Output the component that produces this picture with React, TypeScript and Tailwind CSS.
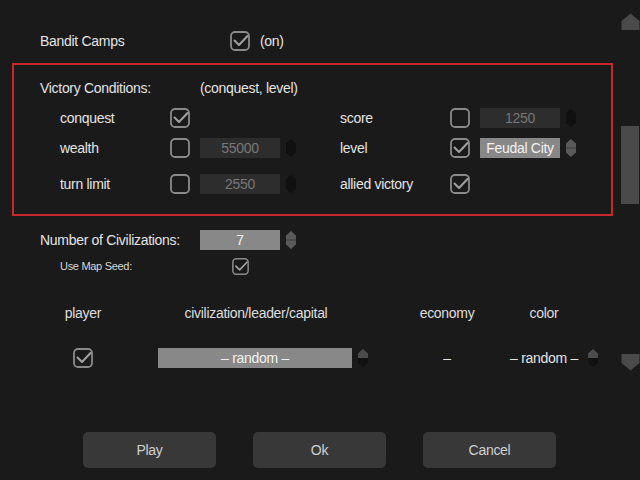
import React from "react";

type SpinTone = "off" | "on" | "split";

function Spinner({ tone }: { tone: SpinTone }) {
  const top = tone === "off" ? "#101010" : tone === "on" ? "#5a5a5a" : "#4c4c4c";
  const bottom = tone === "off" ? "#101010" : tone === "on" ? "#5a5a5a" : "#111111";
  return (
    <svg width="10" height="18" viewBox="0 0 10 18" className="shrink-0">
      <path d="M5 0 L10 4.5 L10 9 L0 9 L0 4.5 Z" fill={top} />
      <path d="M0 9 L10 9 L10 13.5 L5 18 L0 13.5 Z" fill={bottom} />
      {tone === "on" && <rect x="0" y="8.5" width="10" height="1" fill="#3a3a3a" />}
    </svg>
  );
}

function Check({ on, size = 20 }: { on: boolean; size?: number }) {
  return (
    <svg width={size} height={size} viewBox="0 0 20 20" className="shrink-0">
      <rect x="1" y="1" width="18" height="18" rx="4" fill="none" stroke="#8a8a8a" strokeWidth="1.8" />
      {on && (
        <path d="M4.5 9.5 L9 14 L17.5 5" fill="none" stroke="#a0a0a0" strokeWidth="2" strokeLinecap="round" strokeLinejoin="round" />
      )}
    </svg>
  );
}

function Field({ value, active }: { value: string; active: boolean }) {
  return (
    <div
      className={
        active
          ? "w-[80px] h-[20px] shrink-0 bg-[#888888] text-[#f2f2f2] flex items-center justify-center"
          : "w-[80px] h-[20px] shrink-0 bg-[#2d2d2d] text-[#777777] flex items-center justify-center"
      }
    >
      {value}
    </div>
  );
}

interface Cond {
  label: string;
  on: boolean;
  value?: string;
  active?: boolean;
}

function CondCell({ cond, wide }: { cond: Cond; wide: boolean }) {
  return (
    <div className={wide ? "w-[280px] shrink-0 h-[20px] flex items-center" : "w-[250px] shrink-0 h-[20px] flex items-center"}>
      <span className="w-[110px] shrink-0">{cond.label}</span>
      <Check on={cond.on} />
      {cond.value && (
        <>
          <div className="ml-[10px]">
            <Field value={cond.value} active={!!cond.active} />
          </div>
          <div className="ml-[6px]">
            <Spinner tone={cond.active ? "on" : "off"} />
          </div>
        </>
      )}
    </div>
  );
}

const rows: [Cond, Cond, string][] = [
  [{ label: "conquest", on: true }, { label: "score", on: false, value: "1250" }, "mt-[10px]"],
  [
    { label: "wealth", on: false, value: "55000" },
    { label: "level", on: true, value: "Feudal City", active: true },
    "mt-[10px]",
  ],
  [{ label: "turn limit", on: false, value: "2550" }, { label: "allied victory", on: true }, "mt-[16px]"],
];

function Button({ label }: { label: string }) {
  return (
    <button className="w-[133px] h-[36px] rounded-[5px] bg-[#383838] text-[#d0d0d0] text-[14px] flex items-center justify-center">
      {label}
    </button>
  );
}

export default function App() {
  return (
    <div className="w-[640px] h-[480px] bg-[#1a1a1a] flex overflow-hidden whitespace-nowrap text-[14px] tracking-[-0.3px] text-[#e4e4e4] font-['Liberation_Sans',Arial,sans-serif]">
      <div className="w-[621px] flex flex-col pt-[31px]">
        <div className="h-[20px] flex items-center pl-[40px]">
          <span className="w-[190px]">Bandit Camps</span>
          <Check on />
          <span className="ml-[10px]">(on)</span>
        </div>

        <div className="mt-[12px] ml-[12px] w-[601px] h-[153px] border-2 border-[#c8282b] flex flex-col pt-[13px]">
          <div className="h-[20px] flex items-center pl-[26px]">
            <span className="w-[160px]">Victory Conditions:</span>
            <span>(conquest, level)</span>
          </div>
          {rows.map(([left, right, gap]) => (
            <div key={left.label} className={`${gap} flex pl-[46px]`}>
              <CondCell cond={left} wide />
              <CondCell cond={right} wide={false} />
            </div>
          ))}
        </div>

        <div className="mt-[14px] h-[20px] flex items-center pl-[40px]">
          <span className="w-[160px] shrink-0">Number of Civilizations:</span>
          <Field value="7" active />
          <div className="ml-[6px]">
            <Spinner tone="on" />
          </div>
        </div>

        <div className="mt-[8px] h-[17px] flex items-center pl-[60px]">
          <span className="w-[172px] text-[11px] text-[#d8d8d8]">Use Map Seed:</span>
          <Check on size={17} />
        </div>

        <div className="mt-[28px] h-[20px] flex items-center pl-[33px] text-[#dedede]">
          <span className="w-[100px] text-center">player</span>
          <span className="ml-[25px] w-[196px] text-center">civilization/leader/capital</span>
          <span className="ml-[53px] w-[80px] text-center">economy</span>
          <span className="ml-[17px] w-[80px] text-center">color</span>
        </div>

        <div className="mt-[25px] h-[20px] flex items-center pl-[33px]">
          <div className="w-[100px] flex justify-center">
            <Check on />
          </div>
          <div className="ml-[25px] w-[194px] h-[20px] bg-[#888888] text-[#f2f2f2] flex items-center justify-center">
            – random –
          </div>
          <div className="ml-[6px]">
            <Spinner tone="split" />
          </div>
          <span className="ml-[39px] w-[80px] text-center">–</span>
          <span className="ml-[17px] w-[80px] text-center">– random –</span>
          <div className="ml-[4px]">
            <Spinner tone="split" />
          </div>
        </div>

        <div className="mt-[64px] flex gap-[37px] pl-[83px]">
          <Button label="Play" />
          <Button label="Ok" />
          <Button label="Cancel" />
        </div>
      </div>

      <div className="w-[19px] flex flex-col pt-[13px]">
        <svg width="19" height="17" viewBox="0 0 19 17">
          <path d="M9.5 0.5 L18.5 8 L18.5 17 L0.5 17 L0.5 8 Z" fill="#4a4a4a" />
        </svg>
        <div className="mt-[96px] w-[18px] h-[78px] bg-[#4a4a4a]" />
        <div className="mt-[150px]">
          <svg width="19" height="17" viewBox="0 0 19 17">
            <path d="M0.5 0 L18.5 0 L18.5 9 L9.5 16.5 L0.5 9 Z" fill="#4a4a4a" />
          </svg>
        </div>
      </div>
    </div>
  );
}
